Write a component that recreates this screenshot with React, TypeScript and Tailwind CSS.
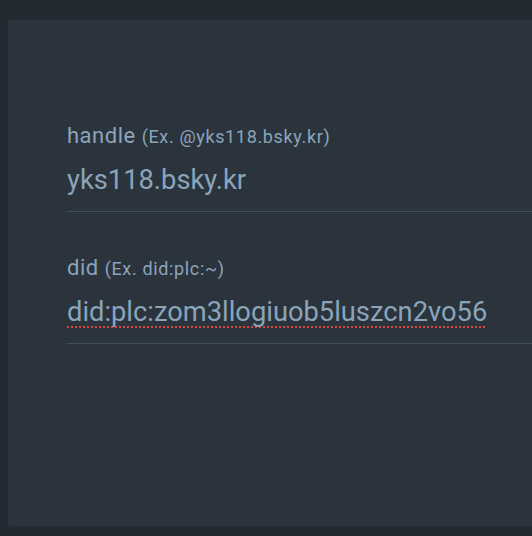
export default function App() {
  return (
    <div
      className="min-h-[536px] w-full bg-[#222b32] pt-5 pb-[10px] pl-2"
      style={{ fontFamily: "Roboto, 'Noto Sans', sans-serif" }}
    >
      <div className="h-[506px] rounded-l bg-[#2b343d] pl-[59px] pt-[102px]">
        <div className="flex flex-col">
          <label className="text-[22px] leading-[28px] tracking-[0.5px] text-[#8aa4ba]">
            handle <span className="text-[18px] tracking-[0.65px] text-[#8aa4ba]">(Ex. @yks118.bsky.kr)</span>
          </label>
          <div className="mt-[12px] border-b border-[#3e5060] pb-[14px] text-[27.3px] leading-[34px] text-[#8aa4ba]">
            yks118.bsky.kr
          </div>
        </div>
        <div className="mt-[42px] flex flex-col">
          <label className="text-[22px] leading-[28px] tracking-[0.5px] text-[#8aa4ba]">
            did <span className="text-[18px] tracking-[0.65px] text-[#8aa4ba]">(Ex. did:plc:~)</span>
          </label>
          <div className="mt-[12px] border-b border-[#3e5060] pb-[14px] text-[27.3px] leading-[34px] text-[#8aa4ba]">
            <span className="underline decoration-[#d9473a] decoration-dotted decoration-2 underline-offset-[5px] [text-decoration-skip-ink:none]">
              did:plc:zom3llogiuob5luszcn2vo56
            </span>
          </div>
        </div>
      </div>
    </div>
  )
}
